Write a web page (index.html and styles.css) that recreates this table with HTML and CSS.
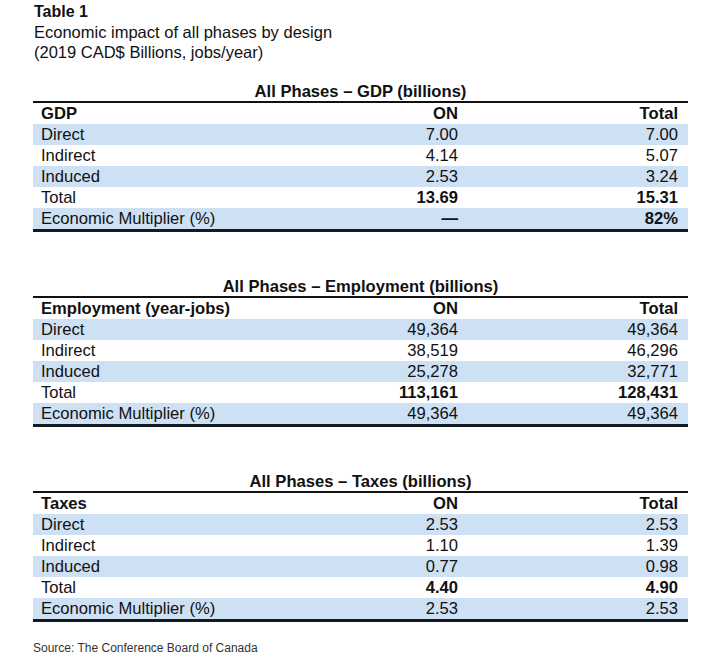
FILE: index.html
```html
<!DOCTYPE html>
<html lang="en">
<head>
    <meta charset="UTF-8">
    <meta name="viewport" content="width=device-width, initial-scale=1.0">
    <title>Table 1 - Economic impact</title>
    <link rel="stylesheet" href="styles.css">
</head>
<body>
    <div class="page">
        <!-- Title block -->
        <div class="title">
            <strong>Table 1</strong>
            <p>Economic impact of all phases by design</p>
            <p>(2019 CAD$ Billions, jobs/year)</p>
        </div>

        <!-- GDP -->
        <table class="impact">
            <caption>All Phases – GDP (billions)</caption>
            <colgroup>
                <col class="col-label">
                <col class="col-on">
                <col class="col-total">
            </colgroup>
            <thead>
                <tr><th>GDP</th><th>ON</th><th>Total</th></tr>
            </thead>
            <tbody>
                <tr class="band"><td>Direct</td><td>7.00</td><td>7.00</td></tr>
                <tr><td>Indirect</td><td>4.14</td><td>5.07</td></tr>
                <tr class="band"><td>Induced</td><td>2.53</td><td>3.24</td></tr>
                <tr class="total"><td>Total</td><td>13.69</td><td>15.31</td></tr>
                <tr class="band multiplier"><td>Economic Multiplier (%)</td><td class="strong">—</td><td class="strong">82%</td></tr>
            </tbody>
        </table>

        <!-- Employment -->
        <table class="impact">
            <caption>All Phases – Employment (billions)</caption>
            <colgroup>
                <col class="col-label">
                <col class="col-on">
                <col class="col-total">
            </colgroup>
            <thead>
                <tr><th>Employment (year-jobs)</th><th>ON</th><th>Total</th></tr>
            </thead>
            <tbody>
                <tr class="band"><td>Direct</td><td>49,364</td><td>49,364</td></tr>
                <tr><td>Indirect</td><td>38,519</td><td>46,296</td></tr>
                <tr class="band"><td>Induced</td><td>25,278</td><td>32,771</td></tr>
                <tr class="total"><td>Total</td><td>113,161</td><td>128,431</td></tr>
                <tr class="band multiplier"><td>Economic Multiplier (%)</td><td>49,364</td><td>49,364</td></tr>
            </tbody>
        </table>

        <!-- Taxes -->
        <table class="impact">
            <caption>All Phases – Taxes (billions)</caption>
            <colgroup>
                <col class="col-label">
                <col class="col-on">
                <col class="col-total">
            </colgroup>
            <thead>
                <tr><th>Taxes</th><th>ON</th><th>Total</th></tr>
            </thead>
            <tbody>
                <tr class="band"><td>Direct</td><td>2.53</td><td>2.53</td></tr>
                <tr><td>Indirect</td><td>1.10</td><td>1.39</td></tr>
                <tr class="band"><td>Induced</td><td>0.77</td><td>0.98</td></tr>
                <tr class="total"><td>Total</td><td>4.40</td><td>4.90</td></tr>
                <tr class="band multiplier"><td>Economic Multiplier (%)</td><td>2.53</td><td>2.53</td></tr>
            </tbody>
        </table>

        <p class="source">Source: The Conference Board of Canada</p>
    </div>
</body>
</html>
```

FILE: styles.css
```css
body {
    font-family: "Liberation Sans", Arial, sans-serif;
    margin: 0;
    padding: 0;
    background-color: #fff;
    color: #111;
}
.page {
    padding: 2px 0 0 33px;
    width: 655px;
}
.title {
    font-size: 16.5px;
    line-height: 20px;
}
.title strong {
    display: block;
    font-size: 16px;
    margin-left: 1px;
}
.title p {
    margin: 0 0 0 1px;
}
.impact {
    width: 655px;
    border-collapse: collapse;
    table-layout: fixed;
    font-size: 16.6px;
    margin-top: 20px;
    margin-bottom: 45px;
}
.impact caption {
    font-weight: bold;
    line-height: 19px;
    text-align: center;
}
.col-label {
    width: 257px;
}
.col-on {
    width: 178px;
}
.col-total {
    width: 220px;
}
.impact thead tr {
    border-top: 2px solid #111;
}
.impact th,
.impact td {
    height: 21px;
    line-height: 21px;
    padding: 0 10px 0 8px;
    text-align: right;
    white-space: nowrap;
}
.impact th {
    font-weight: bold;
}
.impact th:first-child,
.impact td:first-child {
    text-align: left;
}
.band {
    background-color: #cde0f4;
}
.total td + td {
    font-weight: bold;
}
.multiplier {
    border-bottom: 3px solid #141a22;
}
.strong {
    font-weight: bold;
}
.source {
    font-size: 12px;
    color: #333;
    margin: -26px 0 0 0;
}
```
